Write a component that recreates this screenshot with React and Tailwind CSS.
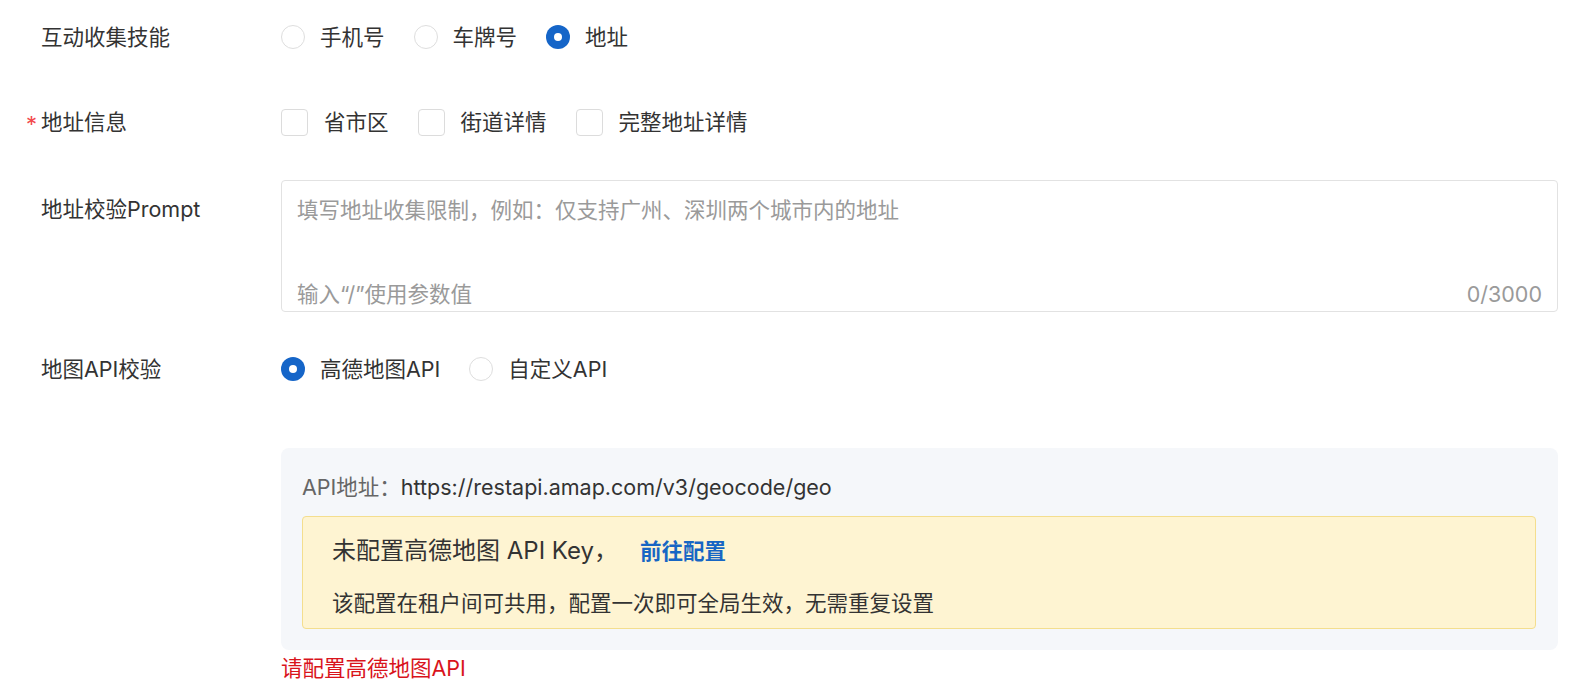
import React, { useState } from 'react';

const FONT = "font-['Inter','Noto_Sans_CJK_SC',sans-serif]";

function Radio({ checked, label, onClick }) {
  return (
    <button type="button" onClick={onClick} className="flex items-center gap-[15px] mr-[29px] h-8">
      {checked ? (
        <span className="w-6 h-6 rounded-full bg-[#1565c8] flex items-center justify-center">
          <span className="w-2 h-2 rounded-full bg-white" />
        </span>
      ) : (
        <span className="w-6 h-6 rounded-full border border-[#dedede] bg-white" />
      )}
      <span className="text-[21.5px] text-[#333]">{label}</span>
    </button>
  );
}

function Checkbox({ label }) {
  return (
    <label className="flex items-center gap-[16px] mr-[29px] h-8">
      <span className="w-[27px] h-[27px] rounded-[4px] border border-[#dcdcdc] bg-white" />
      <span className="text-[21.5px] text-[#333]">{label}</span>
    </label>
  );
}

function Label({ children, required }) {
  return (
    <div className="w-[240px] shrink-0 relative h-8 flex items-center text-[21.5px] text-[#333]">
      {required && <span className="absolute left-[-15px] top-[2px] text-[#f2494c] text-[22px]">*</span>}
      {children}
    </div>
  );
}

export default function App() {
  const [skill, setSkill] = useState('address');
  const [mapApi, setMapApi] = useState('amap');

  return (
    <div className={`${FONT} bg-white w-full min-h-[694px] pl-[41px] pr-[36px] pt-[21px]`}>
      {/* 互动收集技能 */}
      <div className="flex">
        <Label>互动收集技能</Label>
        <div className="flex">
          <Radio label="手机号" checked={skill === 'phone'} onClick={() => setSkill('phone')} />
          <Radio label="车牌号" checked={skill === 'plate'} onClick={() => setSkill('plate')} />
          <Radio label="地址" checked={skill === 'address'} onClick={() => setSkill('address')} />
        </div>
      </div>

      {/* 地址信息 */}
      <div className="flex mt-[53px]">
        <Label required>地址信息</Label>
        <div className="flex">
          <Checkbox label="省市区" />
          <Checkbox label="街道详情" />
          <Checkbox label="完整地址详情" />
        </div>
      </div>

      {/* 地址校验Prompt */}
      <div className="flex mt-[42px]">
        <div className="pt-[13px]">
          <Label>地址校验Prompt</Label>
        </div>
        <div className="flex-1 h-[132px] border border-[#e2e2e2] rounded-[4px] px-[15px] pt-[13px] pb-[1px] flex flex-col justify-between">
          <div className="h-8 flex items-center text-[21.5px] text-[#9a9a9a]">填写地址收集限制，例如：仅支持广州、深圳两个城市内的地址</div>
          <div className="h-8 flex items-center justify-between text-[21.5px] text-[#9a9a9a]">
            <span>输入“/”使用参数值</span>
            <span>0/3000</span>
          </div>
        </div>
      </div>

      {/* 地图API校验 */}
      <div className="flex mt-[41px]">
        <Label>地图API校验</Label>
        <div className="flex">
          <Radio label="高德地图API" checked={mapApi === 'amap'} onClick={() => setMapApi('amap')} />
          <Radio label="自定义API" checked={mapApi === 'custom'} onClick={() => setMapApi('custom')} />
        </div>
      </div>

      <div className="flex mt-[63px]">
        <div className="w-[240px] shrink-0" />
        <div className="flex-1">
          <div className="bg-[#f5f7fa] rounded-[8px] pl-[21px] pr-[22px] pt-[23px] pb-[21px]">
            <div className="h-8 flex items-center text-[21.5px]">
              <span className="text-[#666]">API地址：</span>
              <span className="text-[#333]">https://restapi.amap.com/v3/geocode/geo</span>
            </div>
            <div className="mt-[13px] h-[113px] bg-[#fef4d2] border border-[#f4de8e] rounded-[4px] pl-[29px] pt-[18px]">
              <div className="h-8 flex items-center">
                <span className="text-[24px] text-[#333]">未配置高德地图 API Key，</span>
                <span className="ml-[22px] text-[21.5px] font-bold text-[#1766c4] cursor-pointer">前往配置</span>
              </div>
              <div className="mt-[20px] h-8 flex items-center text-[21.5px] text-[#333]">
                该配置在租户间可共用，配置一次即可全局生效，无需重复设置
              </div>
            </div>
          </div>
          <div className="h-9 flex items-center text-[21.5px] text-[#d9141c]">请配置高德地图API</div>
        </div>
      </div>
    </div>
  );
}
